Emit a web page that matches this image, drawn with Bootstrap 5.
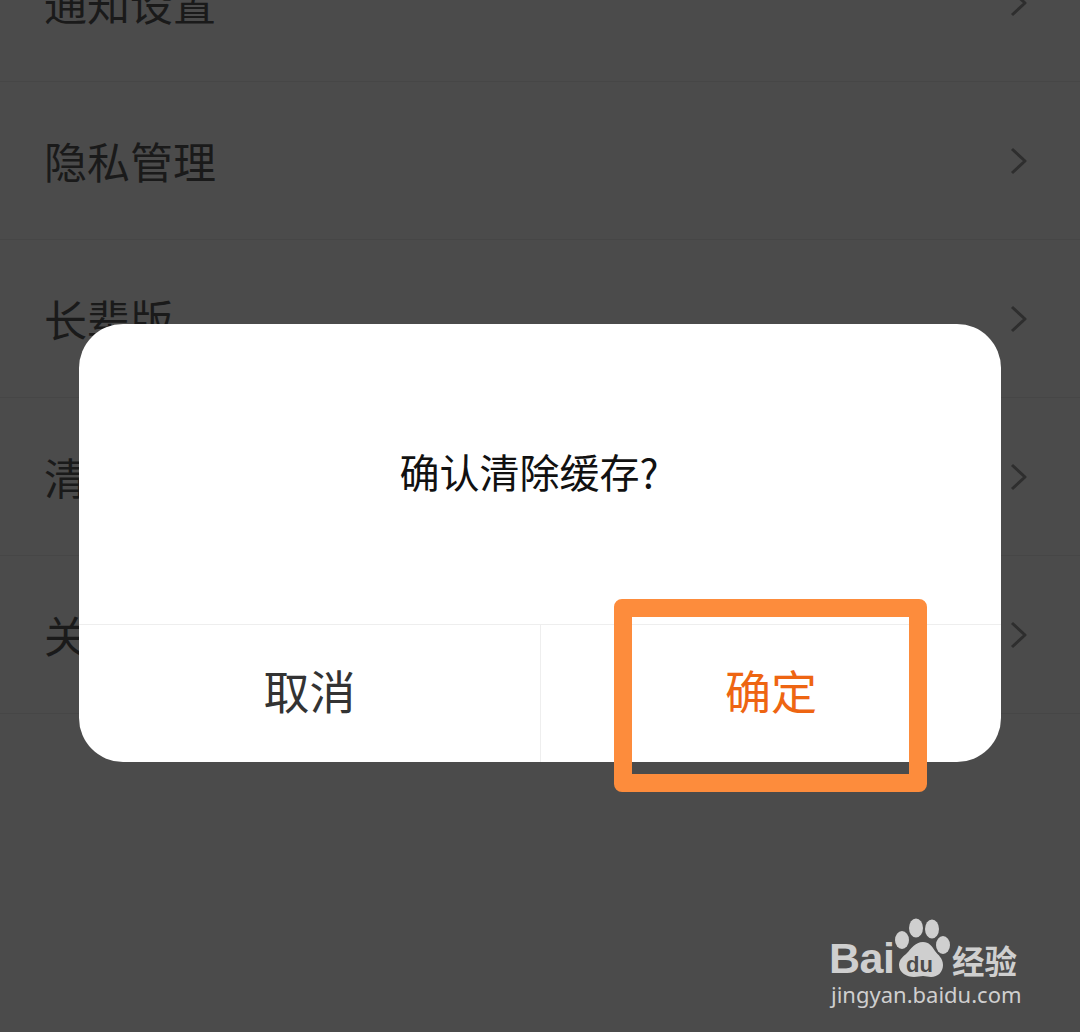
<!DOCTYPE html>
<html lang="zh-CN">
<head>
<meta charset="utf-8">
<title>确认清除缓存</title>
<link href="https://cdn.jsdelivr.net/npm/bootstrap@5.3.0/dist/css/bootstrap.min.css" rel="stylesheet">
<style>
html,body{height:100%;overflow:hidden}
body{background:#4b4b4b;font-family:"Noto Sans CJK SC","Liberation Sans",sans-serif;position:relative}
.set-list{margin-top:-76px}
.set-row{height:158px;border-bottom:1px solid #464646;padding:0 52px 0 44px;color:#1a1a1a;font-size:43px;line-height:1}
.chev{width:18px;height:30px;fill:none;stroke:#2e2e2e;stroke-width:3;stroke-linejoin:round}
.dlg{position:absolute;left:79px;top:324px;width:922px;height:438px;background:#fff;border-radius:44px;overflow:hidden}
.dlg-title{height:300px;font-size:40px;color:#111;padding:0 22px 6px 0;line-height:1}
.dlg-foot{height:138px;border-top:1px solid #eeeeee}
.dlg-btn{font-size:46px;color:#333;line-height:1;padding-bottom:10px}
.dlg-btn+.dlg-btn{border-left:1px solid #eeeeee;color:#ee6512}
.mark-box{position:absolute;left:614px;top:599px;width:313px;height:193px;border:18px solid #fd8c3c;border-radius:8px}
.wm{position:absolute;left:828px;top:915px;width:195px;height:96px;color:#cfcfcf}
.wm-bai{position:absolute;left:1px;top:22px;font:700 43px/1 "Liberation Sans",sans-serif;letter-spacing:-.5px}
.wm-jing{position:absolute;left:3px;top:68px;font-family:"Noto Sans","Liberation Sans",sans-serif;font-size:22px;line-height:1;white-space:nowrap}
.wm-cn{position:absolute;left:124px;top:29px;height:32px;overflow:visible;font-size:32.5px;line-height:32px;font-weight:700;white-space:nowrap}
.wm-paw{position:absolute;left:66px;top:0;width:60px;height:64px}
.wm-du{font:700 22px "Liberation Sans",sans-serif;fill:#4b4b4b}
</style>
</head>
<body>
<div class="set-list">
  <div class="set-row d-flex justify-content-between align-items-center"><span>通知设置</span><svg class="chev" viewBox="0 0 18 30"><path d="M2 3l13 12L2 27"/></svg></div>
  <div class="set-row d-flex justify-content-between align-items-center"><span>隐私管理</span><svg class="chev" viewBox="0 0 18 30"><path d="M2 3l13 12L2 27"/></svg></div>
  <div class="set-row d-flex justify-content-between align-items-center"><span>长辈版</span><svg class="chev" viewBox="0 0 18 30"><path d="M2 3l13 12L2 27"/></svg></div>
  <div class="set-row d-flex justify-content-between align-items-center"><span>清除缓存</span><svg class="chev" viewBox="0 0 18 30"><path d="M2 3l13 12L2 27"/></svg></div>
  <div class="set-row d-flex justify-content-between align-items-center"><span>关于我们</span><svg class="chev" viewBox="0 0 18 30"><path d="M2 3l13 12L2 27"/></svg></div>
</div>

<div class="dlg d-flex flex-column">
  <div class="dlg-title d-flex align-items-center justify-content-center">确认清除缓存?</div>
  <div class="dlg-foot d-flex">
    <div class="dlg-btn w-50 d-flex align-items-center justify-content-center">取消</div>
    <div class="dlg-btn w-50 d-flex align-items-center justify-content-center">确定</div>
  </div>
</div>

<div class="mark-box"></div>

<div class="wm">
  <div class="wm-bai">Bai</div>
  <svg class="wm-paw" viewBox="0 0 60 64" fill="#cfcfcf">
    <ellipse cx="22" cy="13" rx="7" ry="9.500"/>
    <ellipse cx="38" cy="14" rx="7" ry="9.500"/>
    <ellipse cx="8" cy="25" rx="7" ry="9"/>
    <ellipse cx="49" cy="30" rx="7" ry="9"/>
    <path d="M29 27c6 0 9 4 12 9 3 4 8 7 8 14 0 7-5 12-12 12-3 0-5-1-8-1s-5 1-9 1C13 62 5 58 5 50c0-6 5-9 8-12 4-4 8-11 16-11z"/>
    <text class="wm-du" x="12" y="57">du</text>
  </svg>
  <div class="wm-cn">经验</div>
  <div class="wm-jing">jingyan.baidu.com</div>
</div>
</body>
</html>
